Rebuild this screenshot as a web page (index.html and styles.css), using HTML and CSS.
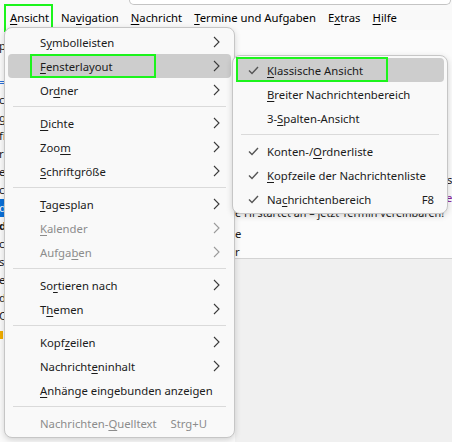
FILE: index.html
```html
<!DOCTYPE html>
<html lang="de">
<head>
  <meta charset="UTF-8">
  <title>Ansicht</title>
  <link rel="stylesheet" href="styles.css">
</head>
<body>
  <div class="app">
    <div class="topstrip"><div class="searchbox"></div></div>

    <div class="menubar">
      <div class="menubar-item open"><u>A</u>nsicht<span class="focus-ring"></span></div>
      <div class="menubar-item">Na<u>v</u>igation</div>
      <div class="menubar-item"><u>N</u>achricht</div>
      <div class="menubar-item"><u>T</u>ermine und Aufgaben</div>
      <div class="menubar-item">E<u>x</u>tras</div>
      <div class="menubar-item"><u>H</u>ilfe</div>
    </div>

    <div class="workspace">
      <div class="folder-pane">
        <div class="folder-row">p</div>
        <div class="folder-row"></div>
        <div class="folder-row link">=</div>
        <div class="folder-row">c</div>
        <div class="folder-row">g</div>
        <div class="folder-row">fi</div>
        <div class="folder-row">r</div>
        <div class="folder-row">e</div>
        <div class="folder-row">c</div>
        <div class="folder-row selected">d</div>
        <div class="folder-row unread">d</div>
        <div class="folder-row">c</div>
        <div class="folder-row">s</div>
        <div class="folder-row">ei</div>
        <div class="folder-row">d</div>
        <div class="folder-row">C</div>
        <div class="folder-row"><span class="tag-icon"></span></div>
      </div>

      <div class="message-pane">
        <div class="thread-list">
          <div class="thread-row"><span class="subject"></span><span class="sender">s</span></div>
          <div class="thread-row"><span class="subject"></span><span class="sender event">te</span></div>
          <div class="thread-row clipped"><span class="subject">e Hi startet an – jetzt Termin vereinbaren!</span></div>
          <div class="thread-row"><span class="subject">e</span></div>
          <div class="thread-row"><span class="subject">r</span></div>
        </div>
        <div class="preview"></div>
      </div>
    </div>
  </div>

  <!-- Ansicht menu -->
  <div class="popup main-menu">
    <div class="item"><span class="label">S<u>y</u>mbolleisten</span><svg class="arrow" width="7" height="12" viewBox="0 0 7 12"><path d="M1 1 L6 6 L1 11"/></svg></div>
    <div class="item active"><span class="label"><u>F</u>ensterlayout</span><svg class="arrow" width="7" height="12" viewBox="0 0 7 12"><path d="M1 1 L6 6 L1 11"/></svg><span class="focus-ring"></span></div>
    <div class="item"><span class="label">Or<u>d</u>ner</span><svg class="arrow" width="7" height="12" viewBox="0 0 7 12"><path d="M1 1 L6 6 L1 11"/></svg></div>
    <div class="sep"></div>
    <div class="item"><span class="label"><u>D</u>ichte</span><svg class="arrow" width="7" height="12" viewBox="0 0 7 12"><path d="M1 1 L6 6 L1 11"/></svg></div>
    <div class="item"><span class="label">Zoo<u>m</u></span><svg class="arrow" width="7" height="12" viewBox="0 0 7 12"><path d="M1 1 L6 6 L1 11"/></svg></div>
    <div class="item"><span class="label"><u>S</u>chriftgröße</span><svg class="arrow" width="7" height="12" viewBox="0 0 7 12"><path d="M1 1 L6 6 L1 11"/></svg></div>
    <div class="sep"></div>
    <div class="item"><span class="label"><u>T</u>agesplan</span><svg class="arrow" width="7" height="12" viewBox="0 0 7 12"><path d="M1 1 L6 6 L1 11"/></svg></div>
    <div class="item disabled"><span class="label"><u>K</u>alender</span><svg class="arrow" width="7" height="12" viewBox="0 0 7 12"><path d="M1 1 L6 6 L1 11"/></svg></div>
    <div class="item disabled"><span class="label">Aufga<u>b</u>en</span><svg class="arrow" width="7" height="12" viewBox="0 0 7 12"><path d="M1 1 L6 6 L1 11"/></svg></div>
    <div class="sep"></div>
    <div class="item"><span class="label">So<u>r</u>tieren nach</span><svg class="arrow" width="7" height="12" viewBox="0 0 7 12"><path d="M1 1 L6 6 L1 11"/></svg></div>
    <div class="item"><span class="label">T<u>h</u>emen</span><svg class="arrow" width="7" height="12" viewBox="0 0 7 12"><path d="M1 1 L6 6 L1 11"/></svg></div>
    <div class="sep"></div>
    <div class="item"><span class="label">Kopf<u>z</u>eilen</span><svg class="arrow" width="7" height="12" viewBox="0 0 7 12"><path d="M1 1 L6 6 L1 11"/></svg></div>
    <div class="item"><span class="label">Nachricht<u>e</u>ninhalt</span><svg class="arrow" width="7" height="12" viewBox="0 0 7 12"><path d="M1 1 L6 6 L1 11"/></svg></div>
    <div class="item"><span class="label"><u>A</u>nhänge eingebunden anzeigen</span></div>
    <div class="sep"></div>
    <div class="item disabled"><span class="label">Nachrichten-<u>Q</u>uelltext</span><span class="shortcut">Strg+U</span></div>
  </div>

  <!-- Fensterlayout submenu -->
  <div class="popup sub-menu">
    <div class="item active"><span class="check"><svg width="11" height="9" viewBox="0 0 11 9"><path d="M1 4.5 L4 7.5 L10 1"/></svg></span><span class="label"><u>K</u>lassische Ansicht</span><span class="focus-ring"></span></div>
    <div class="item"><span class="check"></span><span class="label"><u>B</u>reiter Nachrichtenbereich</span></div>
    <div class="item"><span class="check"></span><span class="label">3-<u>S</u>palten-Ansicht</span></div>
    <div class="sep"></div>
    <div class="item"><span class="check"><svg width="11" height="9" viewBox="0 0 11 9"><path d="M1 4.5 L4 7.5 L10 1"/></svg></span><span class="label">Konten-/<u>O</u>rdnerliste</span></div>
    <div class="item"><span class="check"><svg width="11" height="9" viewBox="0 0 11 9"><path d="M1 4.5 L4 7.5 L10 1"/></svg></span><span class="label"><u>K</u>opfzeile der Nachrichtenliste</span></div>
    <div class="item"><span class="check"><svg width="11" height="9" viewBox="0 0 11 9"><path d="M1 4.5 L4 7.5 L10 1"/></svg></span><span class="label">Na<u>c</u>hrichtenbereich</span><span class="shortcut">F8</span></div>
  </div>
</body>
</html>
```

FILE: styles.css
```css
body {
  margin: 0;
  width: 452px;
  height: 442px;
  overflow: hidden;
  font-family: "Noto Sans", "Open Sans", sans-serif;
  font-size: 11.3px;
  color: #1b1b1b;
  background-color: #f9f9f9;
}

u {
  text-underline-offset: 2px;
}

.app {
  display: flex;
  flex-direction: column;
  height: 442px;
}

.topstrip {
  height: 5px;
}

.searchbox {
  margin-left: 129px;
  width: 320px;
  height: 4px;
  background-color: #fff;
  border: 1px solid #c4c4c4;
  border-top: none;
  border-radius: 0 0 5px 5px;
}

.menubar {
  display: flex;
  height: 25px;
  padding-left: 4px;
  color: #000;
}

.menubar-item {
  position: relative;
  padding: 0 6px;
  line-height: 25px;
}

.focus-ring {
  position: absolute;
  border: 2px solid #1cf41c;
  box-sizing: border-box;
  pointer-events: none;
}

.menubar-item .focus-ring {
  left: 0;
  top: -1px;
  width: 49px;
  height: 28px;
}

.workspace {
  flex: 1;
  display: flex;
  min-height: 0;
}

.folder-pane {
  width: 235px;
  padding-top: 7px;
  background-color: #fafafa;
  overflow: hidden;
}

.folder-row {
  height: 18px;
  line-height: 18px;
  white-space: nowrap;
  text-indent: -1px;
}

.folder-row.link {
  color: #2a6fd6;
}

.folder-row.selected {
  background-color: #0a6fd8;
  color: #fff;
}

.folder-row.unread {
  font-weight: bold;
}

.tag-icon {
  display: inline-block;
  width: 4px;
  height: 8px;
  background-color: #f1ad00;
  vertical-align: middle;
}

.message-pane {
  flex: 1;
  display: flex;
  flex-direction: column;
  min-width: 0;
}

.thread-list {
  box-sizing: border-box;
  height: 229px;
  padding-top: 141px;
  background-color: #fbfbfb;
  border-bottom: 1px solid #d3d3d3;
  overflow: hidden;
}

.thread-row {
  display: flex;
  height: 18px;
  line-height: 18px;
  white-space: nowrap;
}

.thread-row.clipped {
  line-height: 11px;
  font-size: 10.8px;
}

.thread-row .subject {
  flex: 0 0 auto;
}

.thread-row .subject:empty {
  width: 212px;
}

.thread-row .sender.event {
  margin-left: -5px;
  color: #8a1f9c;
}

.preview {
  flex: 1;
  background-color: #f0f0f0;
}

/* popup menus */
.popup {
  position: absolute;
  box-sizing: border-box;
  background-color: #f9f9f9;
  border: 1px solid #c6c6c6;
  border-radius: 8px;
  box-shadow: 0 2px 6px rgba(0, 0, 0, 0.16);
  padding: 2px 3px;
  color: #1b1b1b;
}

.main-menu {
  left: 4px;
  top: 27px;
  width: 231px;
}

.sub-menu {
  left: 232px;
  top: 55px;
  width: 216px;
}

.item {
  position: relative;
  display: flex;
  align-items: center;
  height: 24px;
  padding: 0 11px 0 32px;
  border-radius: 4px;
  white-space: nowrap;
}

.item.active {
  background-color: #cdcdcd;
}

.item.disabled {
  color: #8c8c8c;
}

.item .label {
  flex: 1;
}

.arrow path {
  fill: none;
  stroke: #3a3a3a;
  stroke-width: 1.1;
}

.item.disabled .arrow path {
  stroke: #9a9a9a;
}

.main-menu .shortcut {
  margin-right: 13px;
}

.main-menu .item.active .focus-ring {
  left: 22px;
  top: 0;
  width: 126px;
  height: 24px;
}

.sep {
  height: 1px;
  margin: 4px 5px;
  background-color: #dadada;
}

.sub-menu .item {
  padding: 0 10px 0 12px;
}

.sub-menu .check {
  display: flex;
  align-items: center;
  width: 19px;
  height: 24px;
}

.check path {
  fill: none;
  stroke: #555;
  stroke-width: 1.4;
}

.sub-menu .item.active .focus-ring {
  left: 0;
  top: -1px;
  width: 152px;
  height: 25px;
}
```
